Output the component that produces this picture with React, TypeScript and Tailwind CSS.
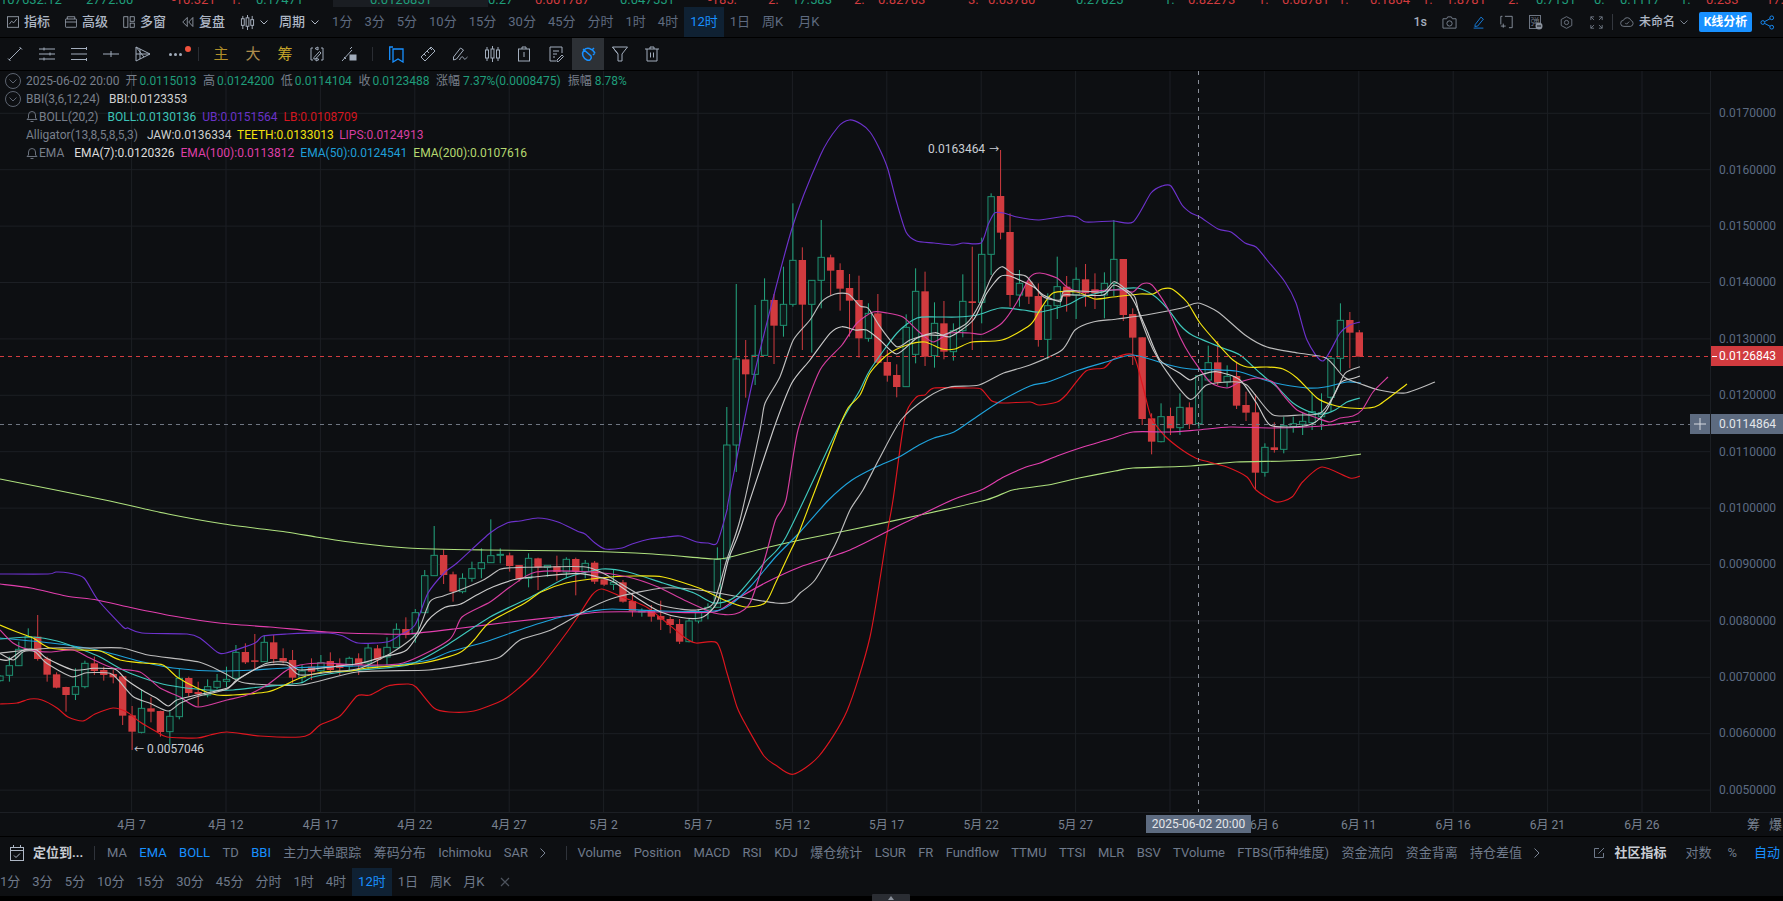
import React from "react";

type C = [number, number, number, number, number];
const seg0: C[] = [[225,228,242,245,1],[170,197,226,245,1],[125,148,197,198,1],[85,110,148,150,1],[45,110,177,182,0],[170,176,224,245,0],[217,223,263,265,0],[260,261,285,335,0],[205,260,283,300,1],[182,190,260,265,1],[170,190,213,225,0],[200,210,225,242,0],[210,222,232,250,0],[227,229,347,375,0],[318,346,395,450,0],[268,325,397,400,1],[292,325,335,367,0],[332,333,396,410,0],[330,349,395,436,1],[207,235,350,358,1],[230,234,279,290,0],[245,276,282,320,0],[238,260,285,292,1],[222,244,262,268,1],[200,238,244,262,1],[135,157,235,235,1],[130,156,187,192,0],[102,181,185,208,0],[105,127,185,185,1],[105,127,177,190,0],[145,174,184,190,0],[150,180,233,250,0],[195,213,233,250,1],[175,200,215,240,0],[165,188,212,222,1],[157,183,210,220,0],[175,192,204,225,0],[170,175,198,215,1],[160,175,195,225,0]];
const seg1: C[] = [[400,414,459,480,1],[405,415,450,474,0],[382,412,441,465,1],[340,358,413,413,1],[322,357,375,385,0],[297,308,372,398,1],[180,197,308,308,1],[48,136,197,197,1],[118,135,195,222,0],[185,193,245,275,0],[190,205,245,250,1],[155,176,205,215,1],[115,158,176,205,1],[28,137,158,158,1],[115,133,135,160,1],[128,136,168,185,0],[165,165,207,215,0],[130,145,205,232,1],[143,145,172,240,0],[165,166,172,200,1],[137,168,186,212,0],[142,148,186,205,1],[143,147,185,256,0],[150,160,185,205,1],[153,158,215,222,0],[205,208,224,228,0],[180,217,223,240,1],[210,217,275,278,0],[252,273,303,320,0],[295,303,306,320,1],[285,303,320,335,0],[272,318,329,360,0],[320,327,345,370,0],[327,342,395,402,0],[327,333,395,397,1],[300,305,333,340,1],[280,292,300,328,1],[112,148,292,292,1]];
const seg2: C[] = [[711,825,1167,1167,1],[342,567,825,906,1],[510,568,613,683,0],[405,556,613,645,1],[325,391,556,557,1],[372,390,467,582,0],[290,403,466,500,1],[100,271,403,410,1],[232,270,404,540,0],[330,331,403,548,1],[150,262,331,415,1],[254,262,302,375,0],[280,300,356,422,0],[312,354,392,500,0],[317,390,505,563,0],[400,430,505,515,1],[372,430,578,580,0],[540,576,617,635,0],[583,615,651,682,0],[433,472,650,650,1],[295,364,553,580,1],[305,364,560,588,0],[397,460,557,593,1],[393,460,545,568,0],[460,482,545,572,1],[313,394,482,502,1],[230,394,399,540,0],[203,253,397,460,1],[70,80,253,315,1],[-60,78,188,208,0],[130,186,375,410,0],[300,340,375,410,1],[330,335,380,402,0],[340,378,510,530,0]];
const seg3: C[] = [[160,197,298,358,1],[50,140,197,237,1],[108,140,170,215,0],[82,118,165,237,1],[72,118,160,200,0],[100,148,160,207,0],[97,130,165,235,1],[-60,58,130,168,1],[57,57,225,243,0],[205,222,293,375,0],[292,292,537,555,0],[520,535,605,643,0],[490,530,605,607,1],[503,528,565,585,0],[460,502,563,585,1],[487,502,553,567,0],[405,407,551,565,1],[317,368,420,425,1],[303,367,427,435,0],[376,409,426,443,1],[365,408,497,507,0],[455,495,518,543,0],[462,517,698,750,0],[610,622,697,710,1],[547,622,630,638,0],[530,557,628,640,1],[530,551,560,578,1],[518,544,553,585,1],[458,515,548,570,1],[460,518,530,570,1],[350,355,472,515,1],[190,241,355,395,1],[216,240,278,385,0],[270,277,350,350,0]];

const mapC = (s: C[], oy: number): C[] => s.map((c) => [oy + c[0] / 3, oy + c[1] / 3, oy + c[2] / 3, oy + c[3] / 3, c[4]] as C);
const candles: C[] = [...mapC(seg0, 600), ...mapC(seg1, 510), ...mapC(seg2, 170), ...mapC(seg3, 240)];
const cx = (i: number) => 1359.3 - 9.44 * (candles.length - 1 - i);

const z = (ox: number, oy: number, a: number[]) => {
  const r: number[] = [];
  for (let i = 0; i < a.length; i += 2) r.push(ox + a[i] / 3, oy + a[i + 1] / 3);
  return r;
};
// smooth curve through the traced points (Catmull-Rom to Bezier)
const smooth = (a: number[]) => {
  const n = a.length / 2;
  const px = (i: number) => a[2 * Math.max(0, Math.min(n - 1, i))];
  const py = (i: number) => a[2 * Math.max(0, Math.min(n - 1, i)) + 1];
  let d = `M${a[0].toFixed(1)} ${a[1].toFixed(1)}`;
  const t = 1 / 8;
  for (let i = 0; i < n - 1; i++) {
    const c1x = px(i) + (px(i + 1) - px(i - 1)) * t;
    const c1y = py(i) + (py(i + 1) - py(i - 1)) * t;
    const c2x = px(i + 1) - (px(i + 2) - px(i)) * t;
    const c2y = py(i + 1) - (py(i + 2) - py(i)) * t;
    d += `C${c1x.toFixed(1)} ${c1y.toFixed(1)} ${c2x.toFixed(1)} ${c2y.toFixed(1)} ${px(i + 1).toFixed(1)} ${py(i + 1).toFixed(1)}`;
  }
  return d;
};

const UB = [0,574,48,574,56,572,69,573,84,578,98,600,123,627,128,628,142,633,187,634,200,638,217,652,226,653,255,643,263,636,287,634,328,633,343,636,358,643,387,642,400,635,415,625,428,593,445,572,457,563,490,533,507,523,520,521,538,518,558,522,577,531,585,534,595,543,605,549,622,548,632,544,650,539,667,537,680,536,697,542,708,543,717,543,727,510,729,498,753.6,377,791.5,230,820.5,155,838,127,849.5,120,861,124,870,132,878.6,147,887.5,168,896,200,906,232,916.5,241,934,243,953.6,245,963,243,981,243,988,225,994.6,213,1003.6,213,1017,217,1039,220,1066,216,1077,217,1086,222,1113,221,1133,222,1151,193,1162,186,1171,186,1182,205,1191,213,1200,217,1218,229,1231,232,1245,243,1256,247,1267,260,1285,282,1296,303,1307,340,1323,361,1340,333,1350,325,1360,322];
const LB = [0,704,17,703,30,699,42,700,57,708,68,717,83,721,95,714,113,708,127,712,140,722,157,732,167,737,197,738,210,735,227,732,260,736,300,737,310,734,320,725,340,716,357,696,370,695,388,686,408,684,416,687,434,708,449,712,474,711,503,700,520,687,536,672,559,643,577,618,592,595,602,589,622,597,648,608,684,637,696,643,717,643,727,673,737,707,747,727,764,756,775.5,765,793,774.3,819,756,847,711,870,637,887,534,893,500,905,417,916.5,397,925,395,934,388,968,388,981,389,992,401,1003.6,403,1030,402,1039,405,1057,402,1066,395,1086,371,1104,368,1115,358,1133,355,1142,383,1151,417,1164,435,1178,447,1195.5,458,1209,462,1227,467,1247,477,1256,490,1276,502,1292,497,1302.5,482,1322,467,1350,478,1360,476];
const MID = [0,639,33,637,57,641,83,650,100,657,123,670,143,678,167,685,207,690,233,690,260,687,300,683,313,677,350,671,408,665,444,647,490,617,531,597,566,578,602,569,628,572,663,583,694,593,714,603,735,597,765,562,786,537,837,430,860,390,870,370,897,333,917,318,937,317,957,317,977,315,1000,308,1023,310,1040,312,1067,305,1083,297,1113,290,1137,288,1153,295,1167,308,1180,325,1192,335,1220,347,1240,355,1260,373,1277,387,1293,403,1310,412,1323,414,1335,410,1347,402,1360,398];
const TEETH = [0,625,17,632,33,638,50,648,77,650,100,651,120,660,143,663,163,665,177,677,197,688,217,695,233,695,267,692,283,686,300,678,323,672,350,671,367,668,423,663,459,653,474,640,490,622,525,603,541,592,566,583,600,578,633,576,663,577,699,588,724,600,745,607,765,603,775.5,583,791,550,800,530,838,430,848,408,860,395,870,373,887,355,907,345,925,342,942,349,955,349,972,342,1002,340,1030,325,1040,310,1053,293,1077,292,1095,299,1113,297,1140,294,1153,294,1162,289,1172,289,1187,302,1200,323,1217,343,1233,360,1247,367,1267,367,1283,369,1297,378,1317,398,1333,405,1350,408,1368,408,1379,405,1407,384];
const LIPS = [0,630,13,643,30,650,50,652,73,650,90,658,113,668,140,672,160,688,180,697,198,707,227,700,247,695,267,685,287,670,300,665,323,663,360,665,403,663,449,640,462,617,490,602,510,587,536,572,592,572,628,577,658,587,684,600,714,613,735,614,750,603,765,558,775.5,520,786,500,798,430,820,370,842,345,857,323,873,312,887,313,903,317,917,330,933,342,950,333,970,333,983,334,1002,323,1017,302,1030,277,1040,273,1057,278,1067,287,1080,292,1107,290,1123,290,1133,292,1142,284,1152,285,1167,307,1180,337,1190,355,1210,382,1227,388,1240,382,1257,378,1273,382,1283,395,1297,410,1317,418,1330,422,1340,418,1353,416,1362,410,1373,392,1388,377];
const E100 = [0,584,31,588,66,596,97,600,133,608,173,616,219,623,270,627,327,632,383,634,408,634,454,629,510,622,566,616,602,612,663,612,714,612,735,600,765,583,800,567,850,550,900,525,952,500,981,490,1003.6,477,1026,467,1040,463,1057,456,1083,447,1110,439,1133,432,1170,432,1197,430,1230,427,1273,428,1307,427,1330,425,1360,421];
const E50 = [0,638,51,643,97,650,143,662,173,668,214,671,255,670,286,668,357,666,388,666,429,660,449,652,485,642,525,628,561,617,592,611,612,609,663,611,714,611,730,605,750,587,775.5,557,800,532,828.6,500,852,480,876,467,899,457,919,445,934,438,954,432,972,420,999,402,1030,386,1048,382,1079,370,1106,362,1133,355,1169,365,1191,369,1236,371,1271,382,1307,388,1325,387,1347,382,1361,383];
const E200 = [0,479,105,500,168,514,224,524,286,532,316,537,357,543,408,548,485,550,577,551,653,554,714,559,730,557,765,548,800,540,850,530,920,515,986,500,1012.5,490,1048,485,1079,478,1115,471,1133,468,1191,466,1236,462,1285,461,1325,459,1361,454];
const JAW = [0,653,51,648,87,648,122,648,148,655,199,662,224,673,245,683,301,685,357,672,429,670,474,663,500,657,520,640,551,630,592,607,617,597,663,588,699,590,740,597,775.5,603,791,602,800,593,815,580,835,545,850,510,863,490,878.6,460,901,420,928,397,950,387,979,385,1003.6,373,1030,365,1062,350,1075,330,1093,322,1117,319,1146,315,1182,308,1198,303,1218,312,1245,335,1267,347,1298,353,1326,358,1344,377,1361,384,1379,390,1405,393,1435,382];
const G1 = [
  ...z(0,600,[0,160,40,180,70,155,105,155,140,190,215,230,260,218,330,220,355,240,400,290,450,310,505,333,540,310,590,290,680,268,710,240,790,198,860,195,900,225,1000,215,1080,205]),
  ...z(350,510,[130,425,200,370,240,275,280,258,330,240,400,210,450,178,490,173,530,172,700,170,760,190,810,220,870,255,930,285,990,297,1040,300,1090,280,1130,150,1170,30]),
  ...z(710,170,[150,780,165,700,210,620,250,510,300,450,335,395,375,372,415,372,450,408,475,415,510,470,560,530,600,510,650,495,700,495,770,460,810,400,845,320,875,290,910,312,950,320,1000,380,1050,390]),
  ...z(1040,240,[70,155,110,152,190,155,222,125,260,150,285,172,300,230,340,330,380,395,450,478,500,435,580,425,620,435,650,470,700,525,780,525,840,520,880,470,915,400,960,380]),
];
const G2 = [
  ...z(0,600,[0,178,25,180,70,150,110,150,140,175,220,210,280,205,345,208,380,240,425,270,470,295,505,318,530,300,590,285,680,265,720,235,800,190,860,187,900,210,1000,200,1080,190]),
  ...z(350,510,[100,440,170,420,235,330,285,292,330,283,380,255,430,230,500,207,560,200,680,190,740,200,790,215,870,270,930,305,990,322,1045,325,1075,310,1105,270,1135,150,1170,60]),
  ...z(710,170,[190,780,245,640,300,570,360,490,395,470,435,480,470,480,510,510,560,552,620,505,675,488,720,500,790,450,830,370,870,320,900,318,970,350,1000,375,1050,395]),
  ...z(1040,240,[70,165,110,165,190,165,222,135,265,160,285,190,320,270,360,360,420,400,450,420,480,405,530,395,600,420,650,490,690,555,770,560,820,550,860,510,900,430,940,415,960,408]),
];

const priceY = (k: number) => 113.3 + k * 56.4;
const gridX = Array.from({ length: 17 }, (_, i) => 131.6 + i * 94.4);
const RED = "#d13b3f";

function Chart() {
  const lines: [number[], string][] = [
    [E200, "#aee07e"], [UB, "#6d32cc"], [LB, "#dd161f"], [E100, "#e23fae"], [E50, "#1fa3dc"],
    [JAW, "#bdbdbd"], [MID, "#3fc8bc"], [TEETH, "#f4e40f"], [LIPS, "#d63ea0"], [G1, "#bfbfbf"], [G2, "#cccccc"],
  ];
  return (
    <svg className="block w-full h-full" viewBox="0 71 1710 741" preserveAspectRatio="none">
      {gridX.map((x) => <line key={x} x1={x} x2={x} y1={71} y2={812} stroke="#1c1f24" />)}
      {Array.from({ length: 13 }, (_, k) => <line key={k} x1={0} x2={1710} y1={priceY(k)} y2={priceY(k)} stroke="#1c1f24" />)}
      {candles.map((c, i) => {
        const x = cx(i);
        const col = c[4] ? "#24a982" : RED;
        return (
          <g key={i}>
            <line x1={x} x2={x} y1={c[0]} y2={c[3]} stroke={col} strokeWidth={1} />
            {c[4] ? (
              <rect x={x - 3.2} y={c[1]} width={6.4} height={Math.max(c[2] - c[1], 1)} fill="#0e1a1a" stroke="#1f8f70" strokeWidth={1} />
            ) : (
              <rect x={x - 3.7} y={c[1]} width={7.4} height={Math.max(c[2] - c[1], 1.5)} fill={RED} />
            )}
          </g>
        );
      })}
      {lines.map(([a, col], i) => (
        <path key={i} d={smooth(a)} fill="none" stroke={col} strokeWidth={1.15} strokeLinejoin="round" />
      ))}
      <line x1={0} x2={1710} y1={356.5} y2={356.5} stroke={RED} strokeDasharray="4 4" />
      <line x1={0} x2={1690} y1={424.5} y2={424.5} stroke="#6f7682" strokeDasharray="4 4" />
      <line x1={1198.5} x2={1198.5} y1={71} y2={812} stroke="#8a8f99" strokeDasharray="4 5" />
    </svg>
  );
}

const I = ({ w = 16, h = 16, children, cls = "" }: { w?: number; h?: number; children: React.ReactNode; cls?: string }) => (
  <svg width={w} height={h} viewBox="0 0 16 16" fill="none" stroke="currentColor" strokeWidth={1} className={"shrink-0 " + cls}>{children}</svg>
);
const Chevron = ({ cls = "" }: { cls?: string }) => (
  <svg width="8" height="5" viewBox="0 0 8 5" fill="none" stroke="currentColor" className={"shrink-0 " + cls}><path d="M0.5 0.5 L4 4 L7.5 0.5" /></svg>
);
const CandleIcon = () => (
  <I w={15} h={15}>
    <path d="M3 1v14M8 0v16M13 1v14" strokeWidth={1} />
    <rect x="1.5" y="4" width="3" height="7" fill="#0d0f12" />
    <rect x="6.5" y="3" width="3" height="9" fill="#0d0f12" />
    <rect x="11.5" y="5" width="3" height="6" fill="#0d0f12" />
  </I>
);

const ticker: [number, string, string][] = [
  [86, "107632.12", "text-[#1f9d7a]"], [86, "2772.00", "text-[#1f9d7a]"], [58, "-10.321", "text-[#d13b3f]"], [26, "1.", "text-[#d13b3f]"], [77, "0.17471", "text-[#1f9d7a]"],
  [37, "", ""], [118, "0.0126851", "text-[#1f9d7a]"], [47, "0.27", "text-[#1f9d7a]"], [85, "0.001787", "text-[#d13b3f]"], [88, "0.047551", "text-[#1f9d7a]"],
  [60, "-185.", "text-[#d13b3f]"], [24, "2.", "text-[#d13b3f]"], [62, "17.583", "text-[#1f9d7a]"], [24, "2.", "text-[#d13b3f]"], [90, "0.82703", "text-[#d13b3f]"], [20, "3.", "text-[#d13b3f]"],
  [88, "0.03780", "text-[#d13b3f]"], [88, "0.27825", "text-[#1f9d7a]"], [24, "1.", "text-[#1f9d7a]"], [70, "0.82273", "text-[#d13b3f]"], [24, "1.", "text-[#d13b3f]"], [56, "0.08781", "text-[#d13b3f]"],
  [32, "1.", "text-[#d13b3f]"], [52, "0.1864", "text-[#d13b3f]"], [24, "1.", "text-[#d13b3f]"], [62, "1.8781", "text-[#d13b3f]"], [28, "2.", "text-[#d13b3f]"], [58, "0.7151", "text-[#1f9d7a]"],
  [26, "0.", "text-[#1f9d7a]"], [60, "0.1117", "text-[#1f9d7a]"], [26, "1.", "text-[#1f9d7a]"], [60, "0.233", "text-[#d13b3f]"], [26, "17.", "text-[#d13b3f]"], [62, "0.5802", "text-[#1f9d7a]"], [20, "0.", "text-[#1f9d7a]"],
];

function Ticker() {
  return (
    <div className="h-[7px] overflow-hidden flex relative shrink-0 whitespace-nowrap text-[13px] leading-[14px]">
      <div className="absolute left-[333px] top-0 w-[155px] h-[7px] bg-[#1a1d22]" />
      {ticker.map(([w, t, c], i) => (
        <span key={i} className={"relative -mt-[7px] shrink-0 " + c} style={{ width: w }}>{t}</span>
      ))}
    </div>
  );
}

const Lab = ({ children }: { children: React.ReactNode }) => <span className="text-[13px] font-medium text-[#aeb7c5] ml-[5px] whitespace-nowrap">{children}</span>;

function TopBar() {
  const ints = ["1分", "3分", "5分", "10分", "15分", "30分", "45分", "分时", "1时", "4时", "12时", "1日", "周K", "月K"];
  return (
    <div className="h-[31px] shrink-0 border-b border-black flex items-center pl-[7px] pr-[8px] text-[#aeb7c5] whitespace-nowrap">
      <div className="flex items-center">
        <I w={12} h={12}><rect x="0.5" y="1" width="15" height="14" /><path d="M3 11 L6 7 L9 9 L13 4" /></I>
        <Lab>指标</Lab>
      </div>
      <div className="flex items-center ml-[15px]">
        <I w={12} h={12}><rect x="0.5" y="4" width="15" height="11" rx="1" /><path d="M3 4 V1 H13 V4 M0.5 8 H15.5" /></I>
        <Lab>高级</Lab>
      </div>
      <div className="flex items-center ml-[15px]">
        <I w={12} h={12}><rect x="1" y="1" width="5.5" height="14" /><rect x="9.5" y="1" width="5.5" height="6" /><rect x="9.5" y="9.5" width="5.5" height="5.5" /></I>
        <Lab>多窗</Lab>
      </div>
      <div className="flex items-center ml-[16px]">
        <I w={12} h={12}><path d="M7 2 L1 8 L7 14 Z" /><path d="M14.5 2 L9 8 L14.5 14 Z" /></I>
        <Lab>复盘</Lab>
      </div>
      <div className="flex items-center ml-[15px]"><CandleIcon /><Chevron cls="ml-[5px]" /></div>
      <span className="text-[13px] font-medium ml-[11px]">周期</span>
      <Chevron cls="ml-[6px] mr-[7px]" />
      {ints.map((t) => (
        <span key={t} className={"px-[6px] h-[30px] flex items-center text-[13px] " + (t === "12时" ? "bg-[#0f2133] text-[#1890ff]" : t === "月K" ? "text-[#5f6b80] ml-[3px]" : "text-[#5f6b80]")}>{t}</span>
      ))}
      <div className="ml-auto flex items-center">
        <span className="text-[12.5px] text-[#a4aebd] font-medium">1s</span>
        <I w={15} h={15} cls="ml-[15px] text-[#7a8390]"><path d="M1 4 H5 L6 2 H10 L11 4 H15 V14 H1 Z" /><circle cx="8" cy="9" r="2.8" /></I>
        <I w={13} h={14} cls="ml-[15px] text-[#1890ff]"><path d="M4 11 L11 2 L14 4.5 L7 13 L3.5 13.5 Z M2 15.5 H14" /></I>
        <I w={13} h={14} cls="ml-[15px] text-[#9aa4b2]"><path d="M6 1 H15 V15 H11 M1 11 V1 H3 M1 13 H7 M4 10 V15" /></I>
        <svg width="14" height="15" viewBox="0 0 14 15" className="ml-[16px] shrink-0">
          <rect x="0.5" y="0.5" width="11" height="13" fill="none" stroke="#6d7582" />
          <text x="1.5" y="10" fontSize="9" fill="#6d7582" fontFamily="'Noto Sans CJK SC'">弹</text>
          <circle cx="10" cy="11" r="3.5" fill="#8a919c" />
          <path d="M8 11 H12" stroke="#0d0f12" />
        </svg>
        <I w={13} h={15} cls="ml-[17px] text-[#7a8390]"><path d="M8 0.8 L14.5 4.3 V11.7 L8 15.2 L1.5 11.7 V4.3 Z" /><circle cx="8" cy="8" r="2.6" /></I>
        <I w={13} h={13} cls="ml-[17px] text-[#7a8390]"><path d="M1 5 V1 H5 M11 1 H15 V5 M15 11 V15 H11 M5 15 H1 V11 M1 1 L5 5 M15 1 L11 5 M15 15 L11 11 M1 15 L5 11" /></I>
        <span className="w-px h-[16px] bg-[#33373e] ml-[9px]" />
        <I w={16} h={14} cls="ml-[6px] text-[#7a8390]"><path d="M4.5 13 A3.5 3.5 0 0 1 4 6 A4.5 4.5 0 0 1 12.5 6.2 A3.5 3.5 0 0 1 12 13 Z M6 9 L7.5 10.5 L10.5 7.5" /></I>
        <span className="text-[12px] font-medium text-[#aeb7c5] ml-[4px]">未命名</span>
        <Chevron cls="ml-[5px] text-[#7a8390]" />
        <span className="ml-[11px] w-[53px] h-[20px] rounded-[2px] bg-[#1890ff] text-white text-[12px] font-bold flex items-center justify-center">K线分析</span>
        <I w={15} h={15} cls="ml-[8px] text-[#1890ff]"><circle cx="12.5" cy="3" r="2" /><circle cx="12.5" cy="13" r="2" /><circle cx="3" cy="8" r="2" /><path d="M5 7 L10.7 4 M5 9 L10.7 12" /></I>
      </div>
    </div>
  );
}

const Cell = ({ children, on }: { children: React.ReactNode; on?: boolean }) => (
  <div className={"w-[32px] h-[32px] shrink-0 flex items-center justify-center " + (on ? "bg-[#2d3136]" : "")}>{children}</div>
);
const Div = ({ w }: { w: string }) => (
  <div className={"flex justify-center shrink-0 " + w}><span className="w-px h-[14px] bg-[#2a2d33]" /></div>
);

function DrawBar() {
  return (
    <div className="h-[33px] shrink-0 border-b border-black flex items-center -ml-px text-[#a2adbc]">
      <Cell><I><path d="M2 14 L14 2 M1 12.5 L3.5 15 M12.5 1 L15 3.5" /></I></Cell>
      <Cell><I><path d="M0 3 H16 M0 8 H16 M0 13 H16" /><path d="M5 1.5 V4.5 M11 6.5 V9.5 M5 11.5 V14.5" /></I></Cell>
      <Cell><I><path d="M0 2.5 H16 M0 8 H16 M0 13.5 H16 M15.5 1 V4 M15.5 12 V15" /></I></Cell>
      <Cell><I><path d="M0 8 H16 M8 5 V11" /></I></Cell>
      <Cell><I><path d="M1 1 L15 8 L1 15 Z M1 1 L9 11 M5 13 L5 3 M1 8 H15" /></I></Cell>
      <div className="w-[32px] h-[32px] shrink-0 relative flex items-center justify-center">
        <span className="flex gap-[2px]"><span className="w-[3px] h-[3px] rounded-full bg-[#a2adbc]" /><span className="w-[3px] h-[3px] rounded-full bg-[#a2adbc]" /><span className="w-[3px] h-[3px] rounded-full bg-[#a2adbc]" /></span>
        <span className="absolute right-0 top-[8px] w-[6px] h-[6px] rounded-full bg-[#f0523d]" />
      </div>
      <Div w="w-[14px]" />
      <Cell><span className="text-[15px] text-[#b18f2a]">主</span></Cell>
      <Cell><span className="text-[15px] text-[#b08d4d]">大</span></Cell>
      <Cell><span className="text-[15px] text-[#c6a52a]">筹</span></Cell>
      <Cell><I><path d="M4 2 H2 V14 H4 M12 2 H14 V14 H12 M5 11.5 L10.5 5.5 L12 7 L6.5 13 L4.8 13 Z M6 2.5 L9 1 V4 Z M10 13.5 L7 15 V12 Z" /></I></Cell>
      <Cell><I><path d="M1 15 L11 4 M11 1 L9 3 M3 11 L5 13" /><rect x="9" y="9" width="6" height="5" fill="#a2adbc" /></I></Cell>
      <Div w="w-[15px]" />
      <Cell><svg width="15" height="17" viewBox="0 0 15 17" fill="none" stroke="#1890ff" strokeWidth="1.3"><path d="M0.7 14 V1 H4 M4 3 H14 V16 L9 13 L4 16 Z" /></svg></Cell>
      <Cell><I><path d="M1 11 L11 1 L15 5 L5 15 Z M4 8 L6 10 M7 5 L9 7 M10 2 L12 4" /></I></Cell>
      <Cell><I w={17}><path d="M1 11 L8 2 L11 4 L4 13 L1 14 Z M7 14 C9 10 10 10 11 12 C12 14 13 13 15 11" /></I></Cell>
      <Cell><I w={17}><path d="M2.5 1 V15 M8 0 V16 M13.5 1 V15" /><rect x="1" y="4" width="3" height="8" fill="#0d0f12" /><rect x="6.5" y="3" width="3" height="9" fill="#0d0f12" /><rect x="12" y="4" width="3" height="8" fill="#0d0f12" /></I></Cell>
      <Cell><I><rect x="2.5" y="3" width="11" height="12" /><path d="M6 3 V1 H10 V3 M8 6 V11" /></I></Cell>
      <Cell><I><path d="M14 7 V1 H2 V15 H8 M5 5 H11 M5 8 H9 M5 11 H7 M9 14 L14 9 L15.5 10.5 L10.5 15.5 H9 Z" /></I></Cell>
      <Cell on><svg width="17" height="17" viewBox="0 0 17 17" fill="none" stroke="#1890ff" strokeWidth="1.5"><path d="M3 3 L11 10 A3 3 0 0 1 7 14 C3 12 1 8 4 4 C7 1 12 2 15 7 M12 4 L14 2 M15 7 L13 9" /></svg></Cell>
      <Cell><I><path d="M0.5 1 H15.5 L10 8 V15 L6 15 V8 Z M0.5 1 L6 8" /></I></Cell>
      <Cell><I><path d="M1 3 H15 M3 3 V15 H13 V3 M6 3 V1 H10 V3 M6.5 6.5 V11.5 M9.5 6.5 V11.5" /></I></Cell>
    </div>
  );
}

const Circ = () => (
  <svg width="16" height="16" viewBox="0 0 16 16" fill="none" stroke="#5d6470" className="mx-[5px] shrink-0">
    <circle cx="8" cy="8" r="7.5" /><path d="M4.5 6.5 L8 10 L11.5 6.5" />
  </svg>
);
const Bell = () => (
  <svg width="12" height="13" viewBox="0 0 12 13" fill="none" stroke="#6a717d" className="shrink-0 mr-[1px]">
    <path d="M1 9.5 H11 L9.5 8 V5 A3.5 3.5 0 0 0 2.5 5 V8 Z M4.5 11.5 H7.5" />
  </svg>
);
const Row = ({ children, cls = "" }: { children: React.ReactNode; cls?: string }) => (
  <div className={"h-[18.2px] flex items-center whitespace-nowrap " + cls}>{children}</div>
);

function Legend() {
  const g = "text-[#1f9d7a]";
  const n = "text-[#787f8b]";
  return (
    <div className="absolute left-0 top-[0.5px] text-[12px] pointer-events-none">
      <Row>
        <Circ />
        <span className={n}>2025-06-02 20:00</span>
        <span className={n + " ml-[6px]"}>开</span><span className={g + " ml-[2px]"}>0.0115013</span>
        <span className={n + " ml-[6.5px]"}>高</span><span className={g + " ml-[2px]"}>0.0124200</span>
        <span className={n + " ml-[6.5px]"}>低</span><span className={g + " ml-[2px]"}>0.0114104</span>
        <span className={n + " ml-[6.5px]"}>收</span><span className={g + " ml-[2px]"}>0.0123488</span>
        <span className={n + " ml-[6.5px]"}>涨幅</span><span className={g + " ml-[3px]"}>7.37%(0.0008475)</span>
        <span className={n + " ml-[7px]"}>振幅</span><span className={g + " ml-[3px]"}>8.78%</span>
      </Row>
      <Row>
        <Circ />
        <span className={n}>BBI(3,6,12,24)</span>
        <span className="ml-[9px] text-[#cfcfcf]">BBI:0.0123353</span>
      </Row>
      <Row cls="pl-[26px]">
        <Bell />
        <span className={n}>BOLL(20,2)</span>
        <span className="ml-[9px] text-[#3cc4b8]">BOLL:0.0130136</span>
        <span className="ml-[6px] text-[#6a32c8]">UB:0.0151564</span>
        <span className="ml-[6px] text-[#d5161f]">LB:0.0108709</span>
      </Row>
      <Row cls="pl-[26px]">
        <span className={n}>Alligator(13,8,5,8,5,3)</span>
        <span className="ml-[9px] text-[#cfcfcf]">JAW:0.0136334</span>
        <span className="ml-[5.5px] text-[#f0e00f]">TEETH:0.0133013</span>
        <span className="ml-[5.5px] text-[#d63ea0]">LIPS:0.0124913</span>
      </Row>
      <Row cls="pl-[26px]">
        <Bell />
        <span className={n}>EMA</span>
        <span className="ml-[10px] text-[#dcdcdc]">EMA(7):0.0120326</span>
        <span className="ml-[6px] text-[#df3fa8]">EMA(100):0.0113812</span>
        <span className="ml-[6px] text-[#1f9fd8]">EMA(50):0.0124541</span>
        <span className="ml-[6px] text-[#b5d870]">EMA(200):0.0107616</span>
      </Row>
    </div>
  );
}

function PriceAxis() {
  const prices = ["0.0170000", "0.0160000", "0.0150000", "0.0140000", "0.0130000", "0.0120000", "0.0110000", "0.0100000", "0.0090000", "0.0080000", "0.0070000", "0.0060000", "0.0050000"];
  return (
    <div className="w-[73px] shrink-0 relative border-l border-[#1c1f24] pt-[14px] overflow-hidden text-[12px] text-[#5c6b82]">
      {prices.map((p) => <div key={p} className="h-[56.4px] flex items-center pl-[8px]">{p}</div>)}
      <div className="absolute left-0 right-0 top-[275px] h-[20px] bg-[#d13b3f] text-white flex items-center pl-[8px]">
        <span className="absolute left-[1px] top-[9.5px] w-[5px] h-px bg-white" />0.0126843
      </div>
      <div className="absolute left-0 right-0 top-[343px] h-[20px] bg-[#5d6b80] text-[#e3e6ea] flex items-center pl-[8px]">0.0114864</div>
    </div>
  );
}

function XAxis() {
  const labels = ["4月 7", "4月 12", "4月 17", "4月 22", "4月 27", "5月 2", "5月 7", "5月 12", "5月 17", "5月 22", "5月 27", "", "6月 6", "6月 11", "6月 16", "6月 21", "6月 26"];
  return (
    <div className="h-[24px] shrink-0 border-t border-[#1c1f24] relative flex items-center pl-[84.4px] text-[12px] text-[#788190] overflow-hidden">
      {labels.map((l, i) => <div key={i} className="w-[94.4px] shrink-0 text-center">{l}</div>)}
      <span className="absolute left-[1747px] text-[13px]">筹</span>
      <span className="absolute left-[1769px] text-[13px]">爆</span>
      <div className="absolute left-[1146px] top-[2px] w-[105px] h-[18px] bg-[#5d6b80] text-[#e3e6ea] flex items-center justify-center">2025-06-02 20:00</div>
    </div>
  );
}

function Indicators() {
  const a: [string, boolean?][] = [["MA"], ["EMA", true], ["BOLL", true], ["TD"], ["BBI", true], ["主力大单跟踪"], ["筹码分布"], ["Ichimoku"], ["SAR"]];
  const b = ["Volume", "Position", "MACD", "RSI", "KDJ", "爆仓统计", "LSUR", "FR", "Fundflow", "TTMU", "TTSI", "MLR", "BSV", "TVolume", "FTBS(币种维度)", "资金流向", "资金背离", "持仓差值"];
  const Gt = () => <svg width="6" height="10" viewBox="0 0 6 10" fill="none" stroke="#7a8494" className="shrink-0"><path d="M0.5 0.5 L5 5 L0.5 9.5" /></svg>;
  return (
    <div className="h-[32px] shrink-0 border-t border-black flex items-center text-[13px] text-[#6f7a8b] whitespace-nowrap pl-[10px] pr-[3px]">
      <svg width="14" height="16" viewBox="0 0 14 16" fill="none" stroke="#aeb7c5" className="shrink-0"><rect x="0.5" y="2.5" width="13" height="13" /><path d="M0.5 5.5 H13.5 M3.5 0 V3 M10.5 0 V3 M4 10.5 L6 12.5 L10 8.5" /></svg>
      <span className="ml-[9px] font-bold text-[#c8ccd3] w-[49px]">定位到...</span>
      <span className="w-px h-[14px] bg-[#2f333a] ml-[12px]" />
      <div className="flex items-center gap-[12.4px] ml-[12px]">
        {a.map(([t, on]) => <span key={t} className={on ? "text-[#1890ff]" : ""}>{t}</span>)}
        <Gt />
      </div>
      <span className="w-px h-[14px] bg-[#2f333a] ml-[20px]" />
      <div className="flex items-center gap-[12.3px] ml-[10px]">
        {b.map((t) => <span key={t}>{t}</span>)}
        <Gt />
      </div>
      <div className="ml-auto flex items-center">
        <svg width="11" height="11" viewBox="0 0 11 11" fill="none" stroke="#6f7a8b" className="shrink-0"><path d="M9.5 6 V10.5 H0.5 V1.5 H5 M4.5 6.5 L10 1" /></svg>
        <span className="ml-[9px] font-bold text-[#c8ccd3]">社区指标</span>
        <span className="ml-[19px]">对数</span>
        <span className="ml-[16px]">%</span>
        <span className="ml-[17px] text-[#1890ff]">自动</span>
      </div>
    </div>
  );
}

function Intervals() {
  const ints = ["1分", "3分", "5分", "10分", "15分", "30分", "45分", "分时", "1时", "4时", "12时", "1日", "周K", "月K"];
  return (
    <div className="h-[28px] shrink-0 flex items-center text-[13px] text-[#6f7a8b] -ml-[6px] whitespace-nowrap">
      {ints.map((t) => (
        <span key={t} className={"px-[6px] h-full flex items-center " + (t === "12时" ? "bg-[#0f2133] text-[#1890ff]" : "")}>{t}</span>
      ))}
      <svg width="10" height="10" viewBox="0 0 10 10" stroke="#4d535d" strokeWidth="1.2" className="ml-[10px] shrink-0"><path d="M1 1 L9 9 M9 1 L1 9" /></svg>
    </div>
  );
}

export default function App() {
  return (
    <div className="w-[1783px] h-[901px] overflow-hidden relative flex flex-col bg-[#0d0f12] font-['Roboto','Noto_Sans_CJK_SC',sans-serif]">
      <Ticker />
      <TopBar />
      <DrawBar />
      <div className="h-[741px] shrink-0 flex">
        <div className="w-[1710px] shrink-0 relative overflow-hidden">
          <Chart />
          <Legend />
          <div className="absolute left-[928px] top-[70px] h-[16px] flex items-center gap-[4px] text-[12px] text-[#c9cdd4] whitespace-nowrap">0.0163464 <span className="text-[10px]">→</span></div>
          <div className="absolute left-[134px] top-[670px] h-[16px] flex items-center gap-[3px] text-[12px] text-[#c9cdd4] whitespace-nowrap"><span className="text-[10px]">←</span> 0.0057046</div>
          <div className="absolute left-[1690px] top-[343px] w-[20px] h-[20px] bg-[#5d6b80] flex items-center justify-center">
            <svg width="12" height="12" viewBox="0 0 12 12" stroke="#d5d9df"><path d="M6 0 V12 M0 6 H12" /></svg>
          </div>
        </div>
        <PriceAxis />
      </div>
      <XAxis />
      <Indicators />
      <Intervals />
      <div className="flex-1 bg-black" />
      <div className="absolute left-[872px] top-[894px] w-[38px] h-[7px] bg-[#2a2d33] rounded-t-[1px] flex items-center justify-center">
        <span className="w-0 h-0 border-l-[3px] border-r-[3px] border-b-[4px] border-l-transparent border-r-transparent border-b-[#8a909a]" />
      </div>
    </div>
  );
}
